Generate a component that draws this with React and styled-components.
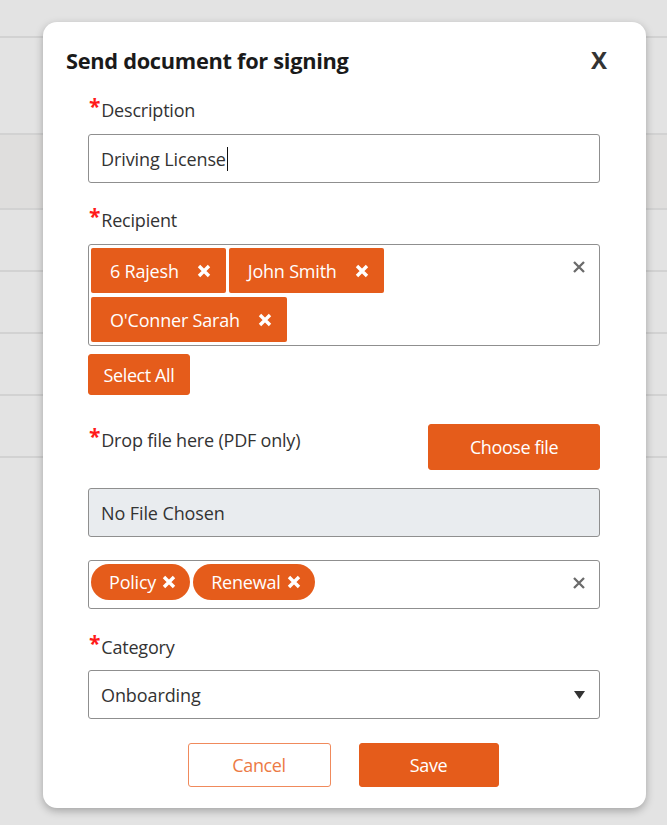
import React from 'react'
import styled, { createGlobalStyle } from 'styled-components'

const GlobalStyle = createGlobalStyle`
  html, body {
    margin: 0;
    padding: 0;
    background: #e3e3e3;
  }
  * { box-sizing: border-box; }
`

const ORANGE = '#e55c1b'

const Page = styled.div`
  position: relative;
  width: 667px;
  height: 825px;
  overflow: hidden;
  background: #e3e3e3;
  font-family: "Open Sans", "Noto Sans", sans-serif;
`

const BgRow = styled.div`
  height: ${p => p.h}px;
  border-bottom: 2px solid #d2d2d2;
  background: ${p => (p.shade ? '#dfdedd' : '#e3e3e3')};
`

const Modal = styled.div`
  position: absolute;
  top: 22px;
  left: 43px;
  width: 603px;
  background: #fff;
  border-radius: 14px;
  box-shadow: 0 3px 8px rgba(0, 0, 0, 0.28);
  padding: 24px 38px 21px 23px;
`

const Header = styled.div`
  display: flex;
  align-items: center;
  justify-content: space-between;
  height: 28px;
`

const Title = styled.h2`
  margin: 0;
  font-size: 21.8px;
  font-weight: 700;
  color: #1a1a1a;
  letter-spacing: -0.3px;
`

const CloseBtn = styled.span`
  font-size: 24px;
  font-weight: 700;
  color: #333;
  line-height: 1;
  margin-right: 1px;
`

const Body = styled.div`
  padding: 0 8px 0 22px;
  display: flex;
  flex-direction: column;
`

const Label = styled.div`
  font-size: 18px;
  line-height: 24px;
  color: #333;
  margin-top: ${p => p.mt}px;
  margin-bottom: ${p => p.mb ?? 12}px;
  padding-left: 1px;
  letter-spacing: -0.2px;
`

const Star = styled.span`
  color: #ff1a1a;
  font-size: 21px;
  font-weight: 700;
  position: relative;
  top: -3px;
  line-height: 0;
  margin-right: 1px;
`

const TextBox = styled.div`
  height: 49px;
  border: 1px solid #8f8f8f;
  border-radius: 3px;
  display: flex;
  align-items: center;
  padding: 0 12px;
  font-size: 18px;
  color: #333;
  letter-spacing: -0.1px;
  background: ${p => (p.disabled ? '#e9ecef' : '#fff')};
  margin-top: ${p => p.mt || 0}px;
`

const Caret = styled.span`
  display: inline-block;
  width: 1px;
  height: 24px;
  background: #111;
  margin-left: 1px;
`

const TagBox = styled.div`
  position: relative;
  border: 1px solid #8f8f8f;
  border-radius: 3px;
  display: flex;
  flex-wrap: wrap;
  align-content: flex-start;
  gap: 4px 3px;
  padding: ${p => (p.pill ? '3px 40px 3px 2px' : '3px 40px 2px 2px')};
  min-height: ${p => p.h}px;
  margin-top: ${p => p.mt || 0}px;
`

const Tag = styled.span`
  display: inline-flex;
  align-items: center;
  background: ${ORANGE};
  color: #fff;
  font-size: 18px;
  border-radius: ${p => (p.pill ? '18px' : '2px')};
  height: ${p => (p.pill ? 36 : 45)}px;
  padding: ${p => (p.pill ? '0 14px 0 18px' : '0 15px 0 19px')};
  gap: ${p => (p.pill ? 6 : 18)}px;
  letter-spacing: -0.2px;
`

const ClearX = styled.span`
  position: absolute;
  right: 13px;
  top: ${p => p.top}px;
  display: flex;
`

const OrangeBtn = styled.button`
  background: ${ORANGE};
  color: #fff;
  border: 1px solid ${ORANGE};
  border-radius: 3px;
  font-family: inherit;
  font-size: 18px;
  height: ${p => p.h}px;
  width: ${p => p.w}px;
  padding: 0;
  letter-spacing: -0.4px;
`

const OutlineBtn = styled(OrangeBtn)`
  background: #fff;
  color: #ec7a45;
  border-color: #f08a5c;
`

const FileRow = styled.div`
  display: flex;
  justify-content: space-between;
  align-items: flex-start;
  margin-top: 29px;
`

const SelectBox = styled(TextBox)`
  justify-content: space-between;
  padding-right: 14px;
`

const Footer = styled.div`
  display: flex;
  justify-content: center;
  gap: 28px;
  margin-top: 24px;
  padding-right: 2px;
`

const Cross = ({ size = 14, color = '#fff', w = 3.4 }) => (
  <svg width={size} height={size} viewBox="0 0 14 14">
    <path d="M2 2 L12 12 M12 2 L2 12" stroke={color} strokeWidth={w} fill="none" />
  </svg>
)

const recipients = ['6 Rajesh', 'John Smith', "O'Conner Sarah"]
const labels = ['Policy', 'Renewal']

// background table rows (heights include the 2px divider)
const bgRows = [
  { h: 38 }, { h: 97 }, { h: 75, shade: true }, { h: 62 }, { h: 62 }, { h: 62 }, { h: 62 },
]

export default function App() {
  return (
    <Page>
      <GlobalStyle />
      {bgRows.map((r, i) => (
        <BgRow key={i} h={r.h} shade={r.shade} />
      ))}
      <Modal>
        <Header>
          <Title>Send document for signing</Title>
          <CloseBtn>X</CloseBtn>
        </Header>
        <Body>
          <Label mt={24}><Star>*</Star>Description</Label>
          <TextBox>Driving License<Caret /></TextBox>

          <Label mt={25}><Star>*</Star>Recipient</Label>
          <TagBox h={102}>
            {recipients.map(name => (
              <Tag key={name}>
                {name}
                <Cross />
              </Tag>
            ))}
            <ClearX top={15}><Cross size={14} color="#6b6b6b" w={2.3} /></ClearX>
          </TagBox>
          <div style={{ marginTop: 8 }}>
            <OrangeBtn h={41} w={102}>Select All</OrangeBtn>
          </div>

          <FileRow>
            <Label mt={4} mb={0}><Star>*</Star>Drop file here (PDF only)</Label>
            <OrangeBtn h={46} w={172}>Choose file</OrangeBtn>
          </FileRow>
          <TextBox disabled mt={18}>No File Chosen</TextBox>

          <TagBox pill h={49} mt={23}>
            {labels.map(l => (
              <Tag pill key={l}>
                {l}
                <Cross />
              </Tag>
            ))}
            <ClearX top={15}><Cross size={14} color="#6b6b6b" w={2.3} /></ClearX>
          </TagBox>

          <Label mt={26} mb={11}><Star>*</Star>Category</Label>
          <SelectBox>
            Onboarding
            <svg width="11" height="8" viewBox="0 0 11 8"><path d="M0 0 H11 L5.5 8 Z" fill="#333" /></svg>
          </SelectBox>

          <Footer>
            <OutlineBtn h={44} w={143}>Cancel</OutlineBtn>
            <OrangeBtn h={44} w={140}>Save</OrangeBtn>
          </Footer>
        </Body>
      </Modal>
    </Page>
  )
}
